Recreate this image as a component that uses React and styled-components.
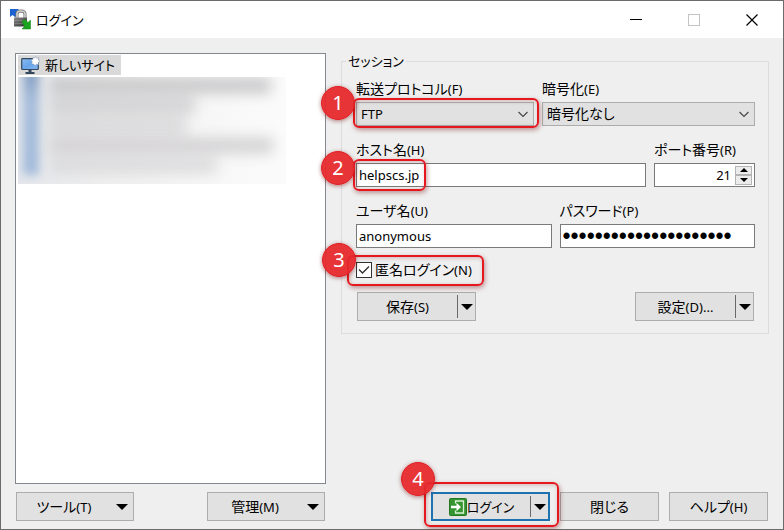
import React, { useId } from "react";
import styled, { createGlobalStyle, css } from "styled-components";

const GlobalStyle = createGlobalStyle`
  *, *::before, *::after { box-sizing: border-box; }
  body { margin: 0; background: #efefef; }
  body, button, input, select {
    font-family: "Noto Sans", "Noto Sans CJK JP", sans-serif;
    font-size: 13px;
    line-height: 20px;
    color: #000;
  }
  body, button, select, label, legend { font-feature-settings: "palt"; }
`;

const DialogWindow = styled.main`
  display: flex;
  flex-direction: column;
  min-height: 100vh;
  background: #efefef;
  border: 1px solid #6b6b6b;
`;

const TitleBar = styled.header`
  display: flex;
  align-items: center;
  height: 37px;
  padding: 0 2px 0 9px;
  background: #fff;
`;

const Title = styled.h1`
  flex: 1;
  margin: 0 0 0 5px;
  font-size: 13px;
  font-weight: 400;
  line-height: 20px;
`;

const CaptionButton = styled.button`
  display: grid;
  place-items: center;
  width: 58px;
  height: 36px;
  padding: 0;
  border: 0;
  background: transparent;
  color: #000;
  &:disabled { color: #c4c4c4; }
`;

const Body = styled.div`
  flex: 1;
  display: grid;
  grid-template-columns: minmax(0, 311fr) minmax(0, 428fr);
  grid-template-rows: 1fr auto;
  gap: 8px 15px;
  padding: 15px 14px 8px;
`;

const SiteTree = styled.ul`
  margin: 0;
  padding: 1px 2px;
  list-style: none;
  background: #fff;
  border: 1px solid #828790;
`;

const SiteItem = styled.button`
  display: flex;
  align-items: center;
  gap: 5px;
  height: 20px;
  padding: 0 6px 0 3px;
  border: 0;
  background: #d9d9d9;
  font-size: 13px;
`;

const HiddenSites = styled.div`
  display: flex;
  width: 268px;
  max-width: 100%;
  height: 107px;
  margin-top: 2px;
  overflow: hidden;
  background: linear-gradient(90deg, #e4e7eb, #efefef 30%, #f6f6f6 65%, #fbfbfb);
`;

const HiddenIcons = styled.div`
  width: 16px;
  height: 106px;
  margin: -8px 0 0 5px;
  background: linear-gradient(#7f9abf, #a6bcda 30%, #a2bada);
  filter: blur(5px);
`;

const HiddenNames = styled.div`
  flex: 1;
  display: flex;
  flex-direction: column;
  gap: 5px;
  padding: 1px 0 0 10px;
  filter: blur(7px);
`;

const HiddenName = styled.span`
  width: ${(p) => p.$width}px;
  height: 15px;
  background: ${(p) => p.$tone};
`;

const Session = styled.fieldset`
  align-self: start;
  display: flex;
  flex-direction: column;
  gap: 14px;
  min-width: 0;
  margin: 0;
  padding: 10px 13px 12px 14px;
  border: 1px solid #dcdcdc;
`;

const Legend = styled.legend`
  height: 16px;
  margin-left: -10px;
  padding: 0 2px;
  font-size: 13px;
  line-height: 16px;
`;

const FieldRow = styled.div`
  display: grid;
  grid-template-columns: ${(p) => p.$columns};
  gap: 8px;
`;

const Field = styled.div`
  display: flex;
  flex-direction: column;
  gap: 3px;
  min-width: 0;
`;

const Label = styled.label`
  font-size: 14px;
  line-height: 20px;
  white-space: nowrap;
`;

const Latin = styled.span`
  font-size: 13px;
`;

const Control = styled.div`
  position: relative;
  display: grid;
  min-width: 0;
`;

const boxed = css`
  width: 100%;
  height: 24px;
  margin: 0;
  border: 1px solid #7a7a7a;
  border-radius: 0;
  outline: 0;
`;

const TextBox = styled.input`
  ${boxed}
  padding: 0 2px;
  background: #fff;
  &[type="password"] {
    font-family: "Liberation Sans", sans-serif;
    font-size: 23px;
  }
`;

const SelectBox = styled.select`
  ${boxed}
  appearance: none;
  padding: 0 24px 0 4px;
  border-color: #adadad;
  background: #e1e1e1;
  font-size: ${(p) => (p.$large ? 14 : 13)}px;
`;

const SelectArrow = styled.svg`
  position: absolute;
  right: 5px;
  top: 9px;
  pointer-events: none;
`;

const NumberBox = styled.div`
  ${boxed}
  display: flex;
  align-items: center;
  padding-right: 2px;
  background: #fff;
`;

const NumberInput = styled.input`
  flex: 1;
  min-width: 0;
  height: 20px;
  padding: 0 4px;
  border: 0;
  outline: 0;
  background: transparent;
  text-align: right;
`;

const Spinner = styled.div`
  display: grid;
  grid-template-rows: 1fr 1fr;
  width: 17px;
  height: 19px;
`;

const SpinButton = styled.button`
  display: grid;
  place-items: center;
  min-height: 0;
  padding: 0;
  border: 1px solid #b4b4b4;
  background: #ececec;
`;

const CheckRow = styled.div`
  position: relative;
  display: flex;
  align-items: center;
  gap: 3px;
  height: 16px;
  align-self: flex-start;
`;

const CheckBox = styled.input`
  appearance: none;
  width: 16px;
  height: 16px;
  margin: 0;
  border: 1px solid #333;
  background: #fff;
`;

const CheckMark = styled.svg`
  position: absolute;
  left: 2px;
  top: 3px;
  pointer-events: none;
`;

const ButtonBar = styled.div`
  display: flex;
  justify-content: ${(p) => (p.$end ? "flex-end" : "space-between")};
  gap: 10px;
  padding: 0 1px;
`;

const face = css`
  height: 29px;
  border: ${(p) => (p.$primary ? "2px solid #1e72b0" : "1px solid #adadad")};
  background: #e1e1e1;
`;

const PushButton = styled.button`
  ${face}
  flex: 0 1 99px;
  padding: 0;
  font-size: 14px;
`;

const MenuButton = styled.button`
  ${face}
  flex: 0 1 118px;
  display: grid;
  grid-template-columns: 1fr 12px;
  gap: 10px;
  align-items: center;
  padding: 0 5px;
  font-size: 14px;
`;

const SplitButton = styled.div`
  ${face}
  position: relative;
  flex: 0 0 119px;
  display: flex;
`;

const SplitMain = styled.button`
  flex: 1;
  display: flex;
  align-items: center;
  justify-content: center;
  padding: 0;
  border: 0;
  background: transparent;
  font-size: ${(p) => (p.$primary ? 13 : 14)}px;
`;

const SplitArrow = styled.button`
  width: 18px;
  margin: 2px 0;
  padding: 0;
  display: grid;
  place-items: center;
  border: 0;
  border-left: 1px solid #696969;
  background: transparent;
`;

const Frame = styled.span`
  position: absolute;
  inset: ${(p) => p.$inset};
  width: ${(p) => (p.$width ? `${p.$width}px` : "auto")};
  z-index: 2;
  border: 2px solid #e4181e;
  border-radius: 6px;
  box-shadow: 1px 2px 5px rgba(110, 0, 0, 0.4), inset 1px 1px 4px rgba(110, 0, 0, 0.25);
  pointer-events: none;
`;

const Badge = styled.span`
  position: absolute;
  left: ${(p) => p.$left}px;
  top: ${(p) => p.$top}px;
  display: grid;
  place-items: center;
  width: 34px;
  height: 34px;
  border-radius: 50%;
  border: 1px solid #e01e22;
  background: rgba(230, 40, 44, 0.94);
  box-shadow: 0 1px 4px rgba(110, 0, 0, 0.5);
  color: #fff;
  font-size: 20px;
  line-height: 24px;
`;

function Callout({ number, inset, width, left, top }) {
  return (
    <Frame $inset={inset} $width={width}>
      <Badge $left={left} $top={top}>{number}</Badge>
    </Frame>
  );
}

function Triangle({ width = 12, height = 6, up = false }) {
  const d = up
    ? `M0 ${height}H${width}L${width / 2} 0Z`
    : `M0 0H${width}L${width / 2} ${height}Z`;
  return (
    <svg width={width} height={height} aria-hidden="true">
      <path d={d} fill="#000" />
    </svg>
  );
}

function Chevron() {
  return (
    <SelectArrow width="12" height="7" viewBox="0 0 12 7" aria-hidden="true">
      <path d="M1.5 1L6 5.5L10.5 1" fill="none" stroke="#444" strokeWidth="1.1" />
    </SelectArrow>
  );
}

function AppIcon() {
  return (
    <svg width="21" height="21" viewBox="0 0 21 21" aria-hidden="true">
      <defs>
        <linearGradient id="lockBody" x1="0" y1="0" x2="1" y2="1">
          <stop offset="0" stopColor="#8a8a8a" />
          <stop offset="1" stopColor="#2e2e2e" />
        </linearGradient>
      </defs>
      <path d="M0 0H9L6.5 2.5L7 7L5 8L2.500 6L0 8Z" fill="#1c62cf" />
      <path d="M7 10V5Q7 2 11 2T15 5V10" fill="none" stroke="#6f6f6f" strokeWidth="3" />
      <path d="M7 10V5Q7 2 11 2T15 5V10" fill="none" stroke="#d2d2d2" strokeWidth="1.6" />
      <rect x="4" y="8.500" width="13" height="9" fill="url(#lockBody)" />
      <path d="M4.500 11.500H16.500M4.500 14.500H16.500" stroke="#a0a0a0" strokeWidth="0.7" opacity="0.6" />
      <path d="M12 12.500L15 10.500L18 13.500L20.500 11V20H12L14.500 17.500Z" fill="#1ba51f" stroke="#0d8414" strokeWidth="0.5" />
    </svg>
  );
}

function NewSiteIcon() {
  return (
    <svg width="19" height="19" viewBox="0 0 19 19" aria-hidden="true">
      <defs>
        <linearGradient id="screen" x1="0" y1="0" x2="1" y2="1">
          <stop offset="0" stopColor="#8dbdf0" />
          <stop offset="0.5" stopColor="#67a4e8" />
          <stop offset="1" stopColor="#86b8f2" />
        </linearGradient>
      </defs>
      <rect x="0.700" y="2.700" width="16.600" height="10.800" rx="0.800" fill="url(#screen)" stroke="#33475e" strokeWidth="1.200" />
      <path d="M7.500 14H10.500V16H13.500V18H4.500V16H7.500Z" fill="#33475e" />
      <path d="M14.500 0.300L15.700 2.200L18 1.700L17.400 4L19 5.300L17.200 6.600L17.500 8.700L15.300 8.200L14 9.800L12.700 8L10.600 8.100L11.300 5.900L10 4.300L11.900 3.500L12 1.400L13.700 2Z" fill="#fff" stroke="#8299b0" strokeWidth="0.500" />
    </svg>
  );
}

function LoginIcon() {
  return (
    <svg width="18" height="18" viewBox="0 0 18 18" aria-hidden="true">
      <rect x="0.500" y="0.500" width="17" height="17" rx="1" fill="#35942f" stroke="#247822" />
      <path d="M6.500 5.500V3H14.500V15H6.500V12.500" fill="none" stroke="#d9f1d5" strokeWidth="1.300" />
      <path d="M2 7.800H7.500V4.800L12 9L7.500 13.200V10.200H2Z" fill="#fff" />
    </svg>
  );
}

const hiddenNames = [
  { width: 222, tone: "#c6c6c8" },
  { width: 146, tone: "#d0d0d2" },
  { width: 138, tone: "#d8d7d9" },
  { width: 224, tone: "#d2d0d2" },
  { width: 168, tone: "#dadadc" },
];

function KeyLabel({ text, accessKey }) {
  return (
    <>
      {text}
      <Latin>({accessKey})</Latin>
    </>
  );
}

function TextField({ text, accessKey, callout, ...input }) {
  const id = useId();
  return (
    <Field>
      <Label htmlFor={id}><KeyLabel text={text} accessKey={accessKey} /></Label>
      <Control>
        <TextBox id={id} {...input} />
        {callout}
      </Control>
    </Field>
  );
}

function SelectField({ text, accessKey, option, large, callout }) {
  const id = useId();
  return (
    <Field>
      <Label htmlFor={id}><KeyLabel text={text} accessKey={accessKey} /></Label>
      <Control>
        <SelectBox id={id} $large={large}>
          <option>{option}</option>
        </SelectBox>
        <Chevron />
        {callout}
      </Control>
    </Field>
  );
}

function Split({ name, primary, children, callout }) {
  return (
    <SplitButton $primary={primary}>
      <SplitMain type="button" $primary={primary}>{children}</SplitMain>
      <SplitArrow type="button" aria-label={name}>
        <Triangle />
      </SplitArrow>
      {callout}
    </SplitButton>
  );
}

export default function App() {
  return (
    <>
      <GlobalStyle />
      <DialogWindow>
        <TitleBar>
          <AppIcon />
          <Title>ログイン</Title>
          <CaptionButton type="button" aria-label="最小化">
            <svg width="12" height="12"><path d="M0 5.500H12" stroke="currentColor" /></svg>
          </CaptionButton>
          <CaptionButton type="button" aria-label="最大化" disabled>
            <svg width="12" height="12"><rect x="0.500" y="0.500" width="11" height="11" fill="none" stroke="currentColor" /></svg>
          </CaptionButton>
          <CaptionButton type="button" aria-label="ウィンドウを閉じる">
            <svg width="12" height="12"><path d="M0.500 0.500L11.500 11.500M11.500 0.500L0.500 11.500" stroke="currentColor" strokeWidth="1.200" /></svg>
          </CaptionButton>
        </TitleBar>

        <Body>
          <SiteTree>
            <li>
              <SiteItem type="button"><NewSiteIcon />新しいサイト</SiteItem>
            </li>
            <li>
              <HiddenSites aria-hidden="true">
                <HiddenIcons />
                <HiddenNames>
                  {hiddenNames.map((row, i) => (
                    <HiddenName key={i} $width={row.width} $tone={row.tone} />
                  ))}
                </HiddenNames>
              </HiddenSites>
            </li>
          </SiteTree>

          <Session>
            <Legend>セッション</Legend>
            <FieldRow $columns="178fr 213fr">
              <SelectField
                text="転送プロトコル"
                accessKey="F"
                option="FTP"
                callout={<Callout number="1" inset="-4px -5px -2px -3px" left={-34} top={-14} />}
              />
              <SelectField text="暗号化" accessKey="E" option="暗号化なし" large />
            </FieldRow>
            <FieldRow $columns="290fr 101fr">
              <TextField
                text="ホスト名"
                accessKey="H"
                defaultValue="helpscs.jp"
                callout={<Callout number="2" inset="-4px auto -4px -3px" width={73} left={-34} top={-10} />}
              />
              <Field>
                <Label htmlFor="port"><KeyLabel text="ポート番号" accessKey="R" /></Label>
                <NumberBox>
                  <NumberInput id="port" inputMode="numeric" defaultValue="21" />
                  <Spinner>
                    <SpinButton type="button" aria-label="増やす"><Triangle width={8} height={4} up /></SpinButton>
                    <SpinButton type="button" aria-label="減らす"><Triangle width={8} height={4} /></SpinButton>
                  </Spinner>
                </NumberBox>
              </Field>
            </FieldRow>
            <FieldRow $columns="1fr 1fr">
              <TextField text="ユーザ名" accessKey="U" defaultValue="anonymous" />
              <TextField text="パスワード" accessKey="P" type="password" defaultValue="anonymous@example.com" />
            </FieldRow>
            <CheckRow>
              <CheckBox id="anonymous" type="checkbox" defaultChecked />
              <CheckMark width="12" height="10" viewBox="0 0 12 10" aria-hidden="true">
                <path d="M1 4.500L4.500 8L11 1.500" fill="none" stroke="#333" strokeWidth="1.400" />
              </CheckMark>
              <Label htmlFor="anonymous"><KeyLabel text="匿名ログイン" accessKey="N" /></Label>
              <Callout number="3" inset="-7px -12px -8px -9px" left={-27} top={-14} />
            </CheckRow>
            <ButtonBar>
              <Split name="保存メニュー"><span><KeyLabel text="保存" accessKey="S" /></span></Split>
              <Split name="設定メニュー"><span><KeyLabel text="設定" accessKey="D" /><Latin>...</Latin></span></Split>
            </ButtonBar>
          </Session>

          <ButtonBar>
            <MenuButton type="button"><span><KeyLabel text="ツール" accessKey="T" /></span><Triangle /></MenuButton>
            <MenuButton type="button"><span><KeyLabel text="管理" accessKey="M" /></span><Triangle /></MenuButton>
          </ButtonBar>

          <ButtonBar $end>
            <Split
              name="ログインメニュー"
              primary
              callout={<Callout number="4" inset="-12px -11px -8px -9px" left={-25} top={-22} />}
            >
              <LoginIcon />ログイン
            </Split>
            <PushButton type="button">閉じる</PushButton>
            <PushButton type="button"><KeyLabel text="ヘルプ" accessKey="H" /></PushButton>
          </ButtonBar>
        </Body>
      </DialogWindow>
    </>
  );
}
